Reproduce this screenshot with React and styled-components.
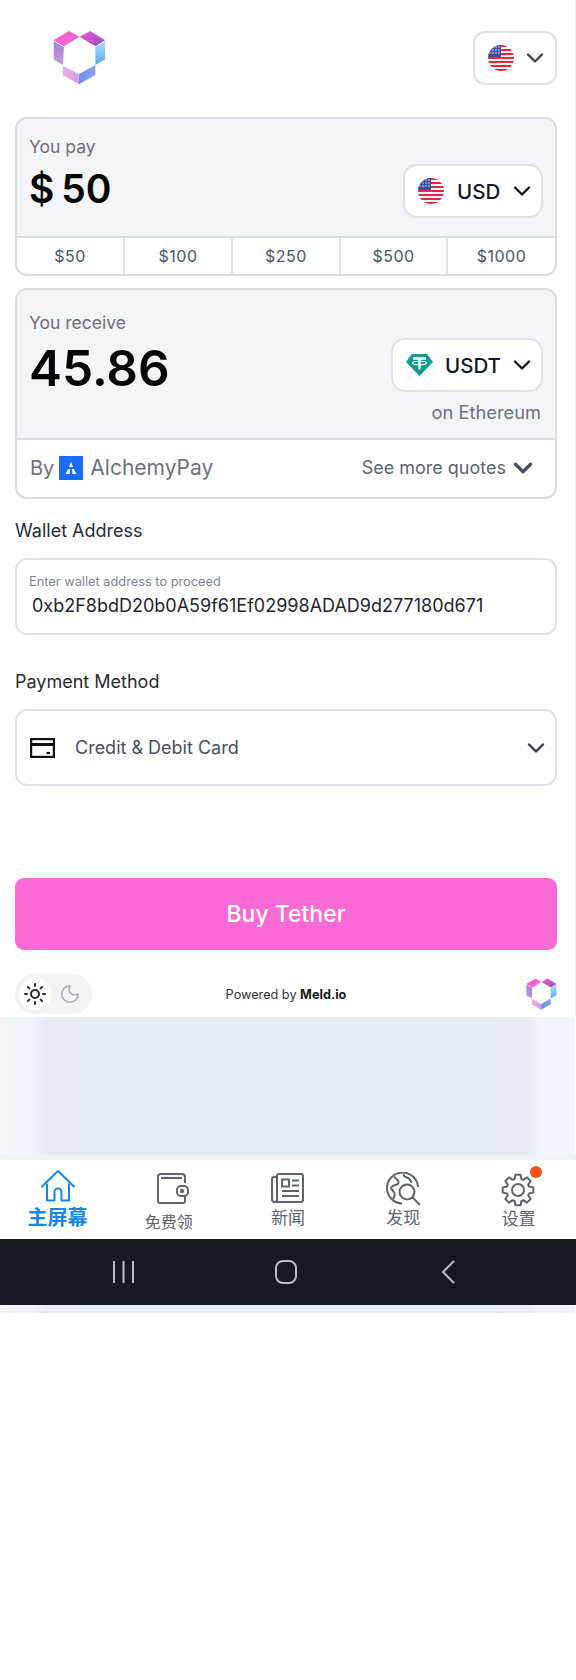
import React from "react";
import styled, { createGlobalStyle } from "styled-components";
import { Sun, Moon, ChevronDown } from "lucide-react";

const GlobalStyle = createGlobalStyle`
  html, body {
    margin: 0;
    background: #fff;
  }
  * {
    box-sizing: border-box;
  }
`;

const Page = styled.div`
  width: 576px;
  min-height: 1680px;
  background: #fff;
  font-family: Inter, "Noto Sans CJK SC", sans-serif;
`;

const Main = styled.div`
  padding: 31px 18px 0 15px;
  height: 1017px;
  display: flex;
  flex-direction: column;
  border-right: 1px solid #f0f1f4;
`;

const Header = styled.div`
  display: flex;
  align-items: center;
  justify-content: space-between;
  height: 54px;
  margin-bottom: 32px;
  padding-left: 38px;
`;

const LangButton = styled.div`
  width: 84px;
  height: 54px;
  padding: 0 6px 0 13px;
  display: flex;
  align-items: center;
  justify-content: space-between;
  border: 2px solid #dfe2e8;
  border-radius: 12px;
  background: #fff;
  color: #374151;
`;

const Card = styled.div`
  border: 2px solid #d8dce4;
  border-radius: 12px;
  overflow: hidden;
  background: #fff;
  margin-bottom: ${(props) => props.$gap || 0}px;
`;

const CardTop = styled.div`
  height: ${(props) => props.$height}px;
  padding: ${(props) => props.$top}px 12px 0 12px;
  background: #f2f4f8;
  border-bottom: 2px solid #d8dce4;
  display: flex;
  justify-content: space-between;
`;

const AmountCol = styled.div`
  display: flex;
  flex-direction: column;
`;

const SmallLabel = styled.div`
  font-size: 17.5px;
  line-height: 24px;
  color: #6b7280;
  margin-bottom: ${(props) => props.$gap}px;
`;

const Amount = styled.div`
  font-weight: 600;
  font-size: ${(props) => props.$size}px;
  line-height: 54px;
  color: #050505;
  word-spacing: ${(props) => props.$wordGap || 0}px;
`;

const SelectCol = styled.div`
  display: flex;
  flex-direction: column;
  align-items: flex-end;
  padding-top: ${(props) => props.$top}px;
`;

const CurrencyButton = styled.div`
  width: ${(props) => props.$width}px;
  height: 54px;
  padding: 0 5px 0 13px;
  display: flex;
  align-items: center;
  border: 2px solid #dfe2e8;
  border-radius: 14px;
  background: #fff;
  color: #111827;
  font-size: 20.5px;
  font-weight: 500;
`;

const CurrencyName = styled.span`
  margin-left: ${(props) => props.$gap}px;
  flex: 1;
`;

const NetworkNote = styled.div`
  margin-top: 8px;
  margin-right: 2px;
  font-size: 18.3px;
  line-height: 24px;
  color: #6b7280;
`;

const QuickRow = styled.div`
  display: grid;
  grid-template-columns: 106px 108px 108px 107px 1fr;
  height: 36px;
`;

const QuickItem = styled.div`
  display: flex;
  align-items: center;
  justify-content: center;
  font-size: 16px;
  letter-spacing: 0.5px;
  color: #4b5563;
  border-left: ${(props) => (props.$first ? "none" : "2px solid #dfe2e8")};
`;

const QuoteRow = styled.div`
  height: 57px;
  padding: 0 17px 2px 13px;
  display: flex;
  align-items: center;
  color: #6b7280;
`;

const By = styled.span`
  font-size: 20px;
  margin-right: 5px;
`;

const ProviderName = styled.span`
  margin-left: 7px;
  font-size: 21px;
  flex: 1;
`;

const MoreQuotes = styled.span`
  font-size: 18px;
  color: #5b6472;
  margin-right: 2px;
`;

const FieldLabel = styled.div`
  font-size: 18px;
  line-height: 24px;
  color: #262c36;
  margin-bottom: ${(props) => props.$gap}px;
`;

const Field = styled.div`
  height: 77px;
  border: 2px solid #dfe2e8;
  border-radius: 12px;
  background: #fff;
`;

const WalletField = styled(Field)`
  padding: 13px 13px 0 12px;
  margin-bottom: 35px;
`;

const WalletHint = styled.div`
  font-size: 12.8px;
  line-height: 18px;
  color: #7a8394;
`;

const WalletValue = styled.div`
  margin: 3px 0 0 3px;
  font-size: 18px;
  line-height: 24px;
  color: #1f2530;
  white-space: nowrap;
`;

const PaymentField = styled(Field)`
  display: flex;
  align-items: center;
  padding: 0 5px 0 13px;
  color: #374151;
`;

const PaymentName = styled.span`
  margin-left: 20px;
  flex: 1;
  font-size: 18px;
  color: #465063;
`;

const BuyButton = styled.div`
  height: 72px;
  margin-top: 92px;
  border-radius: 9px;
  background: #fa69d4;
  color: #fff;
  font-size: 23px;
  font-weight: 500;
  display: flex;
  align-items: center;
  justify-content: center;
`;

const Footer = styled.div`
  margin-top: 24px;
  display: grid;
  grid-template-columns: 1fr auto 1fr;
  align-items: center;
`;

const ThemeToggle = styled.div`
  width: 77px;
  height: 40px;
  border-radius: 20px;
  background: #f1f3f7;
  padding: 0 0 0 4px;
  display: flex;
  align-items: center;
  gap: 3px;
`;

const ToggleItem = styled.span`
  width: 32px;
  height: 32px;
  border-radius: 50%;
  background: ${(props) => (props.$active ? "#fff" : "transparent")};
  color: ${(props) => (props.$active ? "#232b3a" : "#a3adc0")};
  display: flex;
  align-items: center;
  justify-content: center;
`;

const Powered = styled.div`
  font-size: 12.7px;
  color: #333;
`;

const PoweredBrand = styled.b`
  font-weight: 700;
  color: #1a1a1a;
`;

const FooterLogo = styled.div`
  justify-self: end;
  display: flex;
`;

const Band = styled.div`
  height: ${(props) => props.$height}px;
  background: linear-gradient(
    90deg,
    #f5f5fa 0,
    #f5f5fa 8px,
    #eef3fc 11px,
    #eef3fc 33px,
    #e8ebf4 44px,
    #e8ebf4 76px,
    #e4ecf4 78px,
    #e4ecf4 497px,
    #e8ebf4 499px,
    #e8ebf4 528px,
    #eff3fc 540px,
    #eff3fc 565px,
    #f4f5fa 570px,
    #f4f5fa 575px,
    #fff 575px
  );
`;

const BandEdge = styled.div`
  height: 5px;
  background: #eef1f6;
`;

const Nav = styled.div`
  height: 79px;
  background: #fff;
  display: grid;
  grid-template-columns: repeat(5, 1fr);
`;

const NavItem = styled.div`
  position: relative;
  display: flex;
  flex-direction: column;
  align-items: center;
  padding-top: ${(props) => props.$top}px;
  color: ${(props) => (props.$active ? "#1787e6" : "#5d6470")};
`;

const NavLabel = styled.span`
  font-size: ${(props) => props.$size || 17}px;
  font-weight: ${(props) => (props.$active ? 700 : 400)};
  line-height: 20px;
  margin-top: ${(props) => props.$gap}px;
  margin-right: ${(props) => props.$shift || 0}px;
`;

const Badge = styled.span`
  position: absolute;
  top: 6px;
  left: 69px;
  width: 12px;
  height: 12px;
  border-radius: 50%;
  background: #f4511e;
`;

const SystemBar = styled.div`
  height: 66px;
  background: #151a23;
  display: flex;
  align-items: center;
  padding-left: 113px;
  color: #b9bdc6;
`;

const SystemSlot = styled.div`
  width: ${(props) => props.$width}px;
  display: flex;
`;

const MeldLogo = ({ size, id }) => (
  <svg width={size} height={size * 1.04} viewBox="70 45 160 165">
    <defs>
      <linearGradient id={`${id}a`} x1="0" y1="0" x2="1" y2="1">
        <stop offset="0" stopColor="#ff5cc8" />
        <stop offset="1" stopColor="#f666d8" />
      </linearGradient>
      <linearGradient id={`${id}b`} x1="0" y1="0" x2="1" y2="1">
        <stop offset="0" stopColor="#f35ecb" />
        <stop offset="1" stopColor="#8e4cc4" />
      </linearGradient>
      <linearGradient id={`${id}c`} x1="0" y1="0" x2="0" y2="1">
        <stop offset="0" stopColor="#a8e2fb" />
        <stop offset="1" stopColor="#5ba7ea" />
      </linearGradient>
      <linearGradient id={`${id}d`} x1="0" y1="0" x2="1" y2="0">
        <stop offset="0" stopColor="#6f8fe2" />
        <stop offset="1" stopColor="#86a4ee" />
      </linearGradient>
      <linearGradient id={`${id}e`} x1="0" y1="0" x2="1" y2="0">
        <stop offset="0" stopColor="#eab0e8" />
        <stop offset="1" stopColor="#d79be2" />
      </linearGradient>
      <linearGradient id={`${id}f`} x1="0" y1="0" x2="0" y2="1">
        <stop offset="0" stopColor="#a67fd6" />
        <stop offset="1" stopColor="#c395e0" />
      </linearGradient>
    </defs>
    <polygon points="72,75 118,47 150,65 103,93" fill={`url(#${id}a)`} />
    <polygon points="150,65 182,47 227,75 198,93" fill={`url(#${id}b)`} />
    <polygon points="198,96 227,78 227,133 198,150" fill={`url(#${id}c)`} />
    <polygon points="148,178 198,150 198,180 148,208" fill={`url(#${id}d)`} />
    <polygon points="100,152 148,178 148,208 100,180" fill={`url(#${id}e)`} />
    <polygon points="72,78 103,96 100,150 72,133" fill={`url(#${id}f)`} />
  </svg>
);

const UsFlag = ({ id }) => (
  <svg width="26" height="26" viewBox="0 0 26 26">
    <defs>
      <clipPath id={id}>
        <circle cx="13" cy="13" r="13" />
      </clipPath>
    </defs>
    <g clipPath={`url(#${id})`}>
      <rect width="26" height="26" fill="#f5f5f8" />
      {[0, 4, 8, 12, 16, 20, 24].map((y) => (
        <rect key={y} y={y} width="26" height="2" fill="#e8263f" />
      ))}
      <rect width="13" height="12" fill="#3f4f9e" />
      {[2, 5, 8, 11].map((x) =>
        [2, 5, 8].map((y) => (
          <circle key={`${x}-${y}`} cx={x} cy={y} r="0.7" fill="#fff" />
        ))
      )}
    </g>
  </svg>
);

const TetherIcon = () => (
  <svg width="27" height="22" viewBox="0 0 27 22">
    <polygon points="6,0 21,0 27,8 13.5,22 0,8" fill="#109c8e" />
    <path d="M7 4.5h13M13.5 4.5v11" stroke="#fff" strokeWidth="2.4" fill="none" />
    <ellipse cx="13.5" cy="9" rx="7" ry="1.8" stroke="#fff" strokeWidth="1.1" fill="none" />
  </svg>
);

const AlchemyIcon = () => (
  <svg width="24" height="24" viewBox="0 0 24 24">
    <rect width="24" height="24" fill="#1a6dff" />
    <path d="M12 6l2.2 5h-4.400zM9.200 13h2l-.6 5H6.500zM12.800 13h2l2.700 5h-4.100z" fill="#fff" />
  </svg>
);

const CardIcon = () => (
  <svg width="25" height="20" viewBox="0 0 25 20" fill="none" stroke="#111" strokeWidth="2.2">
    <rect x="1.100" y="1.100" width="22.800" height="17.800" />
    <path d="M1 6.500h23" strokeWidth="3" />
    <path d="M16.500 15h3.500" />
  </svg>
);

const HomeIcon = () => (
  <svg width="34" height="32" viewBox="0 0 34 32" fill="none" stroke="currentColor" strokeWidth="2">
    <path d="M1 16.500L17 1l16 15.500" strokeLinecap="round" strokeLinejoin="round" />
    <path d="M6 13.500V30.500h7.500V22a3.500 3.500 0 0 1 7 0v8.500H28V13.500" strokeLinejoin="round" />
  </svg>
);

const WalletIcon = () => (
  <svg width="32" height="31" viewBox="0 0 32 31" fill="none" stroke="currentColor" strokeWidth="2">
    <path d="M28 10V4a3 3 0 0 0-3-3H4a3 3 0 0 0-3 3v24a2 2 0 0 0 2 2h23a2 2 0 0 0 2-2v-6" strokeLinejoin="round" />
    <path d="M4 5h21" />
    <rect x="20" y="13" width="11" height="10" rx="4" />
    <circle cx="25" cy="18" r="1.200" fill="currentColor" />
  </svg>
);

const NewsIcon = () => (
  <svg width="33" height="30" viewBox="0 0 33 30" fill="none" stroke="currentColor" strokeWidth="2">
    <path d="M6 4H3a2 2 0 0 0-2 2v20a3 3 0 0 0 3 3h26a2 2 0 0 0 2-2V3a2 2 0 0 0-2-2H8a2 2 0 0 0-2 2v22a3 3 0 0 1-2 4" strokeLinejoin="round" />
    <rect x="11" y="6.500" width="7" height="7" />
    <path d="M21 7.500h7M21 12.500h7M11 18h17M11 23h17" />
  </svg>
);

const GlobeIcon = () => (
  <svg width="35" height="34" viewBox="0 0 35 34" fill="none" stroke="currentColor" strokeWidth="2">
    <path d="M16 31.500A15.500 15.500 0 1 1 32 15" />
    <path d="M8 4.500c2 3 5 3.500 4.500 6.500-.5 2.500-5 1.500-7 4-1.500 2 2 3.500 3 6 .8 2-1 4-1 6" />
    <path d="M18 2c-1 2 1 3 3 3.500 3 .8 3 3.500 5 5" />
    <circle cx="21" cy="20" r="7.500" />
    <path d="M26.500 25.500l7 7" strokeLinecap="round" />
  </svg>
);

// eight teeth around the centre of a 34px box
const gearPoints = () => {
  const points = [];
  for (let i = 0; i < 8; i += 1) {
    const base = (i * Math.PI) / 4;
    [
      [-0.3, 11.5],
      [-0.17, 15.5],
      [0.17, 15.5],
      [0.3, 11.5],
    ].forEach(([offset, radius]) => {
      const x = 17 + radius * Math.sin(base + offset);
      const y = 17 - radius * Math.cos(base + offset);
      points.push(`${x.toFixed(2)},${y.toFixed(2)}`);
    });
  }
  return points.join(" ");
};

const GearIcon = () => (
  <svg width="34" height="34" viewBox="0 0 34 34" fill="none" stroke="currentColor" strokeWidth="2" strokeLinejoin="round">
    <polygon points={gearPoints()} />
    <circle cx="17" cy="17" r="6" />
  </svg>
);

const MenuBars = () => (
  <svg width="21" height="24" viewBox="0 0 21 24" stroke="currentColor" strokeWidth="2">
    <path d="M1 1v22M10.500 1v22M20 1v22" />
  </svg>
);

const HomeSquare = () => (
  <svg width="22" height="24" viewBox="0 0 22 24" fill="none" stroke="currentColor" strokeWidth="2">
    <rect x="1" y="1" width="20" height="22" rx="7" />
  </svg>
);

const BackArrow = () => (
  <svg width="14" height="24" viewBox="0 0 14 24" fill="none" stroke="currentColor" strokeWidth="2">
    <path d="M13 1L2 12l11 11" />
  </svg>
);

const quickAmounts = ["$50", "$100", "$250", "$500", "$1000"];

function App() {
  return (
    <Page>
      <GlobalStyle />
      <Main>
        <Header>
          <MeldLogo size={53} id="top" />
          <LangButton>
            <UsFlag id="flagLang" />
            <ChevronDown size={28} strokeWidth={2} />
          </LangButton>
        </Header>

        <Card $gap={12}>
          <CardTop $height={119} $top={16}>
            <AmountCol>
              <SmallLabel $gap={3}>You pay</SmallLabel>
              <Amount $size={39} $wordGap={-3}>$ 50</Amount>
            </AmountCol>
            <SelectCol $top={29}>
              <CurrencyButton $width={140}>
                <UsFlag id="flagPay" />
                <CurrencyName $gap={13}>USD</CurrencyName>
                <ChevronDown size={28} strokeWidth={2} />
              </CurrencyButton>
            </SelectCol>
          </CardTop>
          <QuickRow>
            {quickAmounts.map((amount, index) => (
              <QuickItem key={amount} $first={index === 0}>
                {amount}
              </QuickItem>
            ))}
          </QuickRow>
        </Card>

        <Card $gap={20}>
          <CardTop $height={150} $top={21}>
            <AmountCol>
              <SmallLabel $gap={6}>You receive</SmallLabel>
              <Amount $size={49.5}>45.86</Amount>
            </AmountCol>
            <SelectCol $top={27}>
              <CurrencyButton $width={152}>
                <TetherIcon />
                <CurrencyName $gap={12}>USDT</CurrencyName>
                <ChevronDown size={28} strokeWidth={2} />
              </CurrencyButton>
              <NetworkNote>on Ethereum</NetworkNote>
            </SelectCol>
          </CardTop>
          <QuoteRow>
            <By>By</By>
            <AlchemyIcon />
            <ProviderName>AlchemyPay</ProviderName>
            <MoreQuotes>See more quotes</MoreQuotes>
            <ChevronDown size={30} strokeWidth={2.6} color="#465063" />
          </QuoteRow>
        </Card>

        <FieldLabel $gap={15}>Wallet Address</FieldLabel>
        <WalletField>
          <WalletHint>Enter wallet address to proceed</WalletHint>
          <WalletValue>0xb2F8bdD20b0A59f61Ef02998ADAD9d277180d671</WalletValue>
        </WalletField>

        <FieldLabel $gap={15}>Payment Method</FieldLabel>
        <PaymentField>
          <CardIcon />
          <PaymentName>Credit &amp; Debit Card</PaymentName>
          <ChevronDown size={28} strokeWidth={2.1} />
        </PaymentField>

        <BuyButton>Buy Tether</BuyButton>

        <Footer>
          <ThemeToggle>
            <ToggleItem $active>
              <Sun size={24} strokeWidth={2} />
            </ToggleItem>
            <ToggleItem>
              <Moon size={22} strokeWidth={1.6} />
            </ToggleItem>
          </ThemeToggle>
          <Powered>
            Powered by <PoweredBrand>Meld.io</PoweredBrand>
          </Powered>
          <FooterLogo>
            <MeldLogo size={31} id="foot" />
          </FooterLogo>
        </Footer>
      </Main>

      <Band $height={138} />
      <BandEdge />
      <Nav>
        <NavItem $active $top={10}>
          <HomeIcon />
          <NavLabel $active $size={20} $gap={6}>主屏幕</NavLabel>
        </NavItem>
        <NavItem $top={13}>
          <WalletIcon />
          <NavLabel $size={16} $gap={8} $shift={8}>免费领</NavLabel>
        </NavItem>
        <NavItem $top={13}>
          <NewsIcon />
          <NavLabel $gap={5}>新闻</NavLabel>
        </NavItem>
        <NavItem $top={12}>
          <GlobeIcon />
          <NavLabel $gap={2}>发现</NavLabel>
        </NavItem>
        <NavItem $top={13}>
          <GearIcon />
          <Badge />
          <NavLabel $gap={2}>设置</NavLabel>
        </NavItem>
      </Nav>
      <SystemBar>
        <SystemSlot $width={162}>
          <MenuBars />
        </SystemSlot>
        <SystemSlot $width={166}>
          <HomeSquare />
        </SystemSlot>
        <SystemSlot $width={20}>
          <BackArrow />
        </SystemSlot>
      </SystemBar>
      <Band $height={8} />
    </Page>
  );
}

export default App;
